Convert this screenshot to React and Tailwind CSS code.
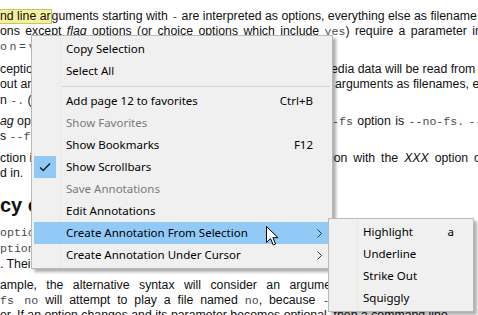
import React from "react";

const mono = "font-['Liberation_Mono',monospace] text-[11.6px] text-[#4b4b4b]";

const mainItems = [
  { label: "Copy Selection" },
  { label: "Select All" },
  { sep: true },
  { label: "Add page 12 to favorites", shortcut: "Ctrl+B" },
  { label: "Show Favorites", disabled: true },
  { label: "Show Bookmarks", shortcut: "F12" },
  { label: "Show Scrollbars", checked: true },
  { label: "Save Annotations", disabled: true },
  { label: "Edit Annotations" },
  { label: "Create Annotation From Selection", sub: true, active: true },
  { label: "Create Annotation Under Cursor", sub: true },
];

const subItems = [
  { label: "Highlight", shortcut: "a" },
  { label: "Underline" },
  { label: "Strike Out" },
  { label: "Squiggly" },
];

const Chevron = () => (
  <svg width="5" height="9" viewBox="0 0 5 9" className="absolute right-[8px] top-[7px]">
    <path d="M0.5 0.5 L4.5 4.5 L0.5 8.5" fill="none" stroke="#333" strokeWidth="1" />
  </svg>
);

const Check = () => (
  <svg width="22" height="22" viewBox="0 0 22 22">
    <path d="M6 11.5 L9.2 14.5 L16 7.5" fill="none" stroke="#1b1b1b" strokeWidth="1.4" />
  </svg>
);

const MenuRow = ({ item }) => {
  if (item.sep) {
    return (
      <div className="relative flex h-[8px] items-center">
        <div className="ml-[28px] h-px flex-1 bg-[#d2d2d2]" />
      </div>
    );
  }
  return (
    <div
      className={`relative flex h-[22px] items-center ${item.active ? "bg-[#91c9f7]" : ""}`}
    >
      <div
        className={`flex h-[22px] w-[22px] shrink-0 items-center justify-center ${
          item.checked ? "bg-[#90c8f6]" : ""
        }`}
      >
        {item.checked && <Check />}
      </div>
      <span className={`ml-[10px] ${item.disabled ? "text-[#7a7a7a]" : "text-black"}`}>
        {item.label}
      </span>
      {item.shortcut && <span className="ml-auto pr-[17px] text-black">{item.shortcut}</span>}
      {item.sub && <Chevron />}
    </div>
  );
};

const Menu = ({ items, className }) => (
  <div
    className={`absolute border border-[#b9b9b9] bg-[#f0f0f0] p-[2px] shadow-[3px_3px_3px_rgba(0,0,0,0.32)] font-['Noto_Sans',sans-serif] text-[11.5px] leading-[22px] whitespace-nowrap ${className}`}
  >
    <div className="absolute left-[28px] top-0 bottom-0 w-px bg-[#e8e8e8]" />
    {items.map((it, i) => (
      <MenuRow key={i} item={it} />
    ))}
  </div>
);

const Cursor = () => (
  <svg
    width="13"
    height="21"
    viewBox="0 0 13 21"
    className="absolute left-[266px] top-[226px]"
  >
    <path
      d="M0.5 0.5 L0.5 16.5 L4.5 12.6 L7.3 19 L9.6 18 L6.9 11.7 L12 11.7 Z"
      fill="#fff"
      stroke="#000"
      strokeWidth="1"
      strokeLinejoin="miter"
    />
  </svg>
);

const Split = ({ left, right, className = "", rightClass = "pl-[0px]" }) => (
  <div className={`flex h-[15px] leading-[15px] whitespace-nowrap ${className}`}>
    <div className="w-[331px] shrink-0 overflow-hidden">{left}</div>
    <div className={rightClass}>{right}</div>
  </div>
);

export default function App() {
  return (
    <div className="relative h-[315px] w-[478px] overflow-hidden bg-white font-['Liberation_Sans',Arial,sans-serif] text-[12.3px] text-[#111]">
      {/* document page behind the menu */}
      <div className="pt-[9px]">
        <div className="h-[15px] leading-[15px] whitespace-nowrap">
          <span className="inline-block h-[15px] border-y border-r border-[#c9c36a] bg-[#f5f09c] leading-[13px]">
            nd line ar
          </span>
          guments starting with <span className={mono}>-</span> are interpreted as options,
          everything else as filename
        </div>
        <div className="flex h-[15px] w-[482px] justify-between leading-[15px] whitespace-nowrap">
          <span>ons</span>
          <span>except</span>
          <span className="italic">flag</span>
          <span>options</span>
          <span>(or</span>
          <span>choice</span>
          <span>options</span>
          <span>which</span>
          <span>include</span>
          <span>
            <span className={mono}>yes</span>)
          </span>
          <span>require</span>
          <span>a</span>
          <span>parameter</span>
          <span>in</span>
        </div>
        <div className="h-[15px] leading-[15px] whitespace-nowrap">
          <span className={`${mono} tracking-[2.6px]`}>on=v</span>
        </div>

        <Split className="mt-[8px]" left="ception" right="edia data will be read from st" />
        <Split left="out ar" right="arguments as filenames, e" rightClass="pl-[4px]" />
        <div className="mt-[1px] h-[15px] leading-[15px] whitespace-nowrap">
          n <span className={mono}>-.</span> (T
        </div>

        <Split
          className="mt-[6px]"
          left={
            <>
              <span className="italic">ag</span> opt
            </>
          }
          right={
            <>
              <span className={mono}>-fs</span> option is <span className={mono}>--no-fs.</span>{" "}
              <span className={mono}>--</span>
            </>
          }
          rightClass="pl-[1px] [word-spacing:1px]"
        />
        <div className="h-[15px] leading-[15px] whitespace-nowrap">
          s <span className={mono}>--fs</span>
        </div>

        <Split
          className="mt-[7px]"
          left="ction is"
          right={
            <>
              ion with the <span className="italic">XXX</span> option or
            </>
          }
          rightClass="pl-[0px] [word-spacing:2.5px]"
        />
        <div className="h-[15px] leading-[15px] whitespace-nowrap">d in.</div>

        <div className="mt-[12px] h-[24px] text-[20px] font-bold leading-[24px] whitespace-nowrap">
          cy option syntax
        </div>

        <div className={`mt-[8px] h-[15px] leading-[15px] whitespace-nowrap ${mono}`}>option</div>
        <div className={`mt-[1px] h-[15px] leading-[15px] whitespace-nowrap ${mono}`}>ption</div>
        <div className="mt-[1px] h-[15px] leading-[15px] whitespace-nowrap">. Their</div>

        <div className="mt-[6px] h-[15px] leading-[15px] whitespace-nowrap [word-spacing:6px]">
          ample, the alternative syntax will consider an argument
        </div>
        <div className="h-[15px] leading-[15px] whitespace-nowrap [word-spacing:3.5px]">
          <span className={mono}>fs no</span> will attempt to play a file named{" "}
          <span className={mono}>no</span>, because <span className={mono}>--</span>
        </div>
        <div className="h-[15px] leading-[15px] whitespace-nowrap">
          er. If an option changes and its parameter becomes optional, then a command line
        </div>
      </div>

      <Menu items={mainItems} className="left-[31px] top-[35px] w-[302px]" />
      <Menu items={subItems} className="left-[328px] top-[218px] w-[146px]" />
      <Cursor />
    </div>
  );
}
